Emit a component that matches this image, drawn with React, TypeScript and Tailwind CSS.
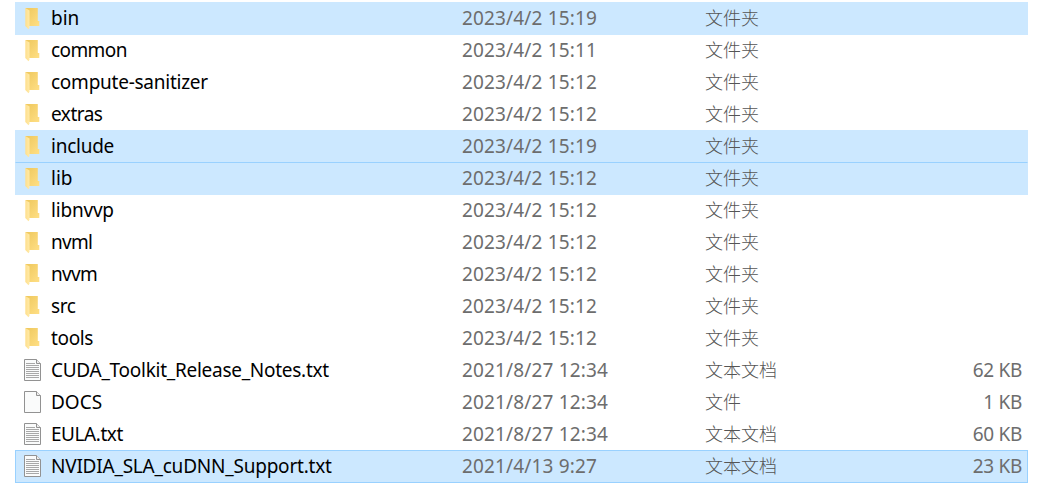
import { clsx } from "clsx"

type Kind = "folder" | "text" | "file"

interface Entry {
  name: string
  date: string
  kind: Kind
  size?: string
  selected?: boolean
  joined?: boolean
  focused?: boolean
  tracking?: string
}

const entries: Entry[] = [
  { name: "bin", date: "2023/4/2 15:19", kind: "folder", selected: true },
  { name: "common", date: "2023/4/2 15:11", kind: "folder", tracking: "tracking-[-0.6px]" },
  { name: "compute-sanitizer", date: "2023/4/2 15:12", kind: "folder", tracking: "tracking-[-0.25px]" },
  { name: "extras", date: "2023/4/2 15:12", kind: "folder", tracking: "tracking-[-0.5px]" },
  { name: "include", date: "2023/4/2 15:19", kind: "folder", selected: true, tracking: "tracking-[-0.25px]" },
  { name: "lib", date: "2023/4/2 15:12", kind: "folder", selected: true, joined: true },
  { name: "libnvvp", date: "2023/4/2 15:12", kind: "folder", tracking: "tracking-[-0.2px]" },
  { name: "nvml", date: "2023/4/2 15:12", kind: "folder", tracking: "tracking-[-0.7px]" },
  { name: "nvvm", date: "2023/4/2 15:12", kind: "folder", tracking: "tracking-[-0.7px]" },
  { name: "src", date: "2023/4/2 15:12", kind: "folder", tracking: "tracking-[-0.4px]" },
  { name: "tools", date: "2023/4/2 15:12", kind: "folder", tracking: "tracking-[-0.35px]" },
  {
    name: "CUDA_Toolkit_Release_Notes.txt",
    date: "2021/8/27 12:34",
    kind: "text",
    size: "62 KB",
    tracking: "tracking-[-0.27px]",
  },
  { name: "DOCS", date: "2021/8/27 12:34", kind: "file", size: "1 KB" },
  { name: "EULA.txt", date: "2021/8/27 12:34", kind: "text", size: "60 KB", tracking: "tracking-[-0.45px]" },
  {
    name: "NVIDIA_SLA_cuDNN_Support.txt",
    date: "2021/4/13 9:27",
    kind: "text",
    size: "23 KB",
    selected: true,
    focused: true,
    tracking: "tracking-[-0.22px]",
  },
]

const kindLabels: Record<Kind, string> = {
  folder: "文件夹",
  text: "文本文档",
  file: "文件",
}

const FolderIcon = () => (
  <svg width="17" height="22" viewBox="0 0 17 22" className="mt-[5px] block">
    <defs>
      <linearGradient id="folder-back" x1="0" y1="0" x2="1" y2="1">
        <stop offset="0" stopColor="#eec75c" />
        <stop offset="1" stopColor="#ffdf85" />
      </linearGradient>
      <linearGradient id="folder-flap" x1="0" y1="0" x2="1" y2="0">
        <stop offset="0" stopColor="#ffdf8c" />
        <stop offset="1" stopColor="#ffeaa8" />
      </linearGradient>
    </defs>
    <path d="M1.3 0H13.8V13H15.3V18H4V3Z" fill="url(#folder-back)" />
    <path d="M1.3 0L5.5 2.5V19.8L4.5 21.3L1.3 18Z" fill="url(#folder-flap)" />
  </svg>
)

const PageIcon = ({ lined }: { lined?: boolean }) => (
  <svg width="17" height="22" viewBox="0 0 17 22" className="mt-1 block">
    <path d="M0.5 0.5H12.5L16.5 4.5V21.5H0.5Z" fill="#fafbfb" stroke="#929292" />
    <path d="M12.5 0.5V4.5H16.5" fill="#eeeeee" stroke="#929292" />
    {lined && (
      <path d="M2 4.5H11M2 6.5H15M2 8.5H15M2 10.5H15M2 12.5H15M2 14.5H15M2 16.5H15M2 18.5H15" fill="none" stroke="#a8a8a8" />
    )}
  </svg>
)

const EntryRow = ({ entry }: { entry: Entry }) => (
  <li
    className={clsx(
      "-mb-px grid h-[33px] grid-cols-[35px_411px_243px_1fr_80px] items-start border pr-[5px]",
      entry.selected ? "bg-[#cce8ff]" : "bg-transparent",
      entry.focused && "border-[#99d1ff]",
      entry.joined && "border-[#cce8ff] border-t-[#99d1ff]",
      !entry.focused && !entry.joined && "border-transparent",
    )}
  >
    <div className="pl-2">{entry.kind === "folder" ? <FolderIcon /> : <PageIcon lined={entry.kind === "text"} />}</div>
    <span className={clsx("text-black", entry.tracking)}>{entry.name}</span>
    <span className="tracking-[0.15px] text-[#6d6d6d]">{entry.date}</span>
    <span className="text-[18px] font-light text-[#555555]">{kindLabels[entry.kind]}</span>
    <span className="text-right tracking-[-0.3px] text-[#6d6d6d]">{entry.size}</span>
  </li>
)

const App = () => (
  <main className="h-[487px] w-[1048px] overflow-hidden bg-white pt-[2px] pl-[15px] font-['Noto_Sans','Noto_Sans_CJK_SC',sans-serif] text-[19px] leading-[30px]">
    <ul className="w-[1013px]">
      {entries.map((entry) => (
        <EntryRow key={entry.name} entry={entry} />
      ))}
    </ul>
  </main>
)

export default App
